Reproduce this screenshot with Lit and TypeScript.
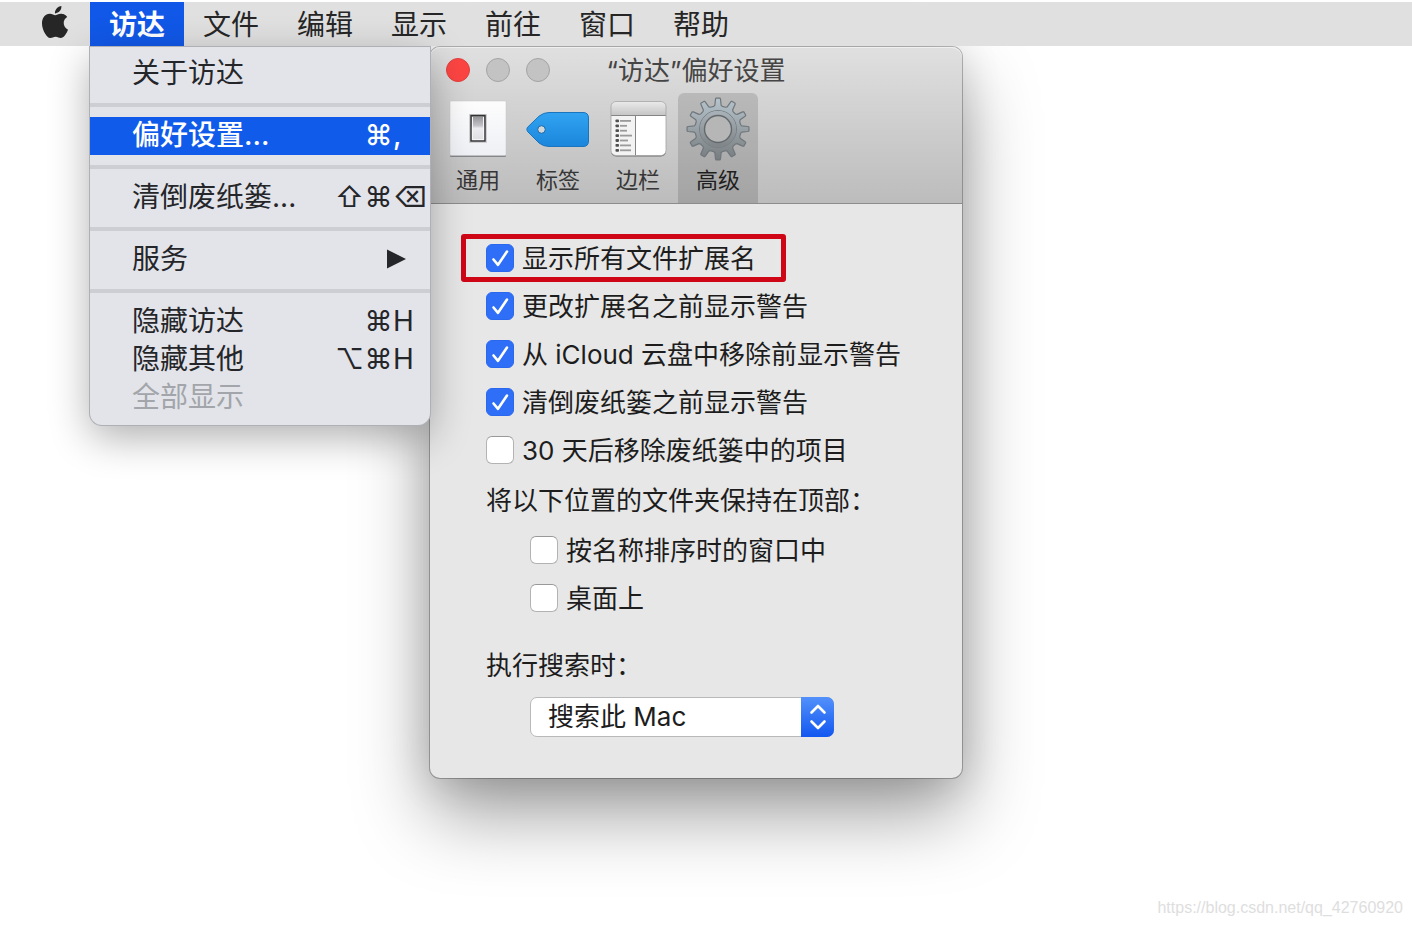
import { LitElement, html, svg, css } from "lit";
import { customElement, property, state } from "lit/decorators.js";
import { classMap } from "lit/directives/class-map.js";

const FONT = css`Inter, "Noto Sans CJK SC", sans-serif`;

/** Outline of a cog wheel with the given number of teeth, centred on 0,0. */
function gearPath(teeth: number, outer: number, root: number): string {
  const step = (Math.PI * 2) / teeth;
  const points: string[] = [];
  for (let i = 0; i < teeth; i++) {
    const a = i * step - Math.PI / 2;
    const corners: [number, number][] = [
      [-0.36, root],
      [-0.25, root + 1],
      [-0.16, outer - 1],
      [-0.12, outer],
      [0.12, outer],
      [0.16, outer - 1],
      [0.25, root + 1],
      [0.36, root],
    ];
    for (const [k, r] of corners) {
      const t = a + k * step;
      points.push(`${(Math.cos(t) * r).toFixed(2)} ${(Math.sin(t) * r).toFixed(2)}`);
    }
  }
  return `M${points.join("L")}Z`;
}

const appleLogo = html`<svg width="32" height="32" viewBox="0 0 24 24" aria-hidden="true">
  <path
    fill="#262626"
    d="M12.152 6.896c-.948 0-2.415-1.078-3.96-1.04-2.04.027-3.91 1.183-4.961 3.014-2.117 3.675-.546 9.103 1.519 12.09 1.013 1.454 2.208 3.09 3.792 3.039 1.52-.065 2.09-.987 3.935-.987 1.831 0 2.35.987 3.96.948 1.637-.026 2.676-1.48 3.676-2.948 1.156-1.688 1.636-3.325 1.662-3.415-.039-.013-3.182-1.221-3.22-4.857-.026-3.04 2.48-4.494 2.597-4.559-1.429-2.09-3.623-2.324-4.39-2.376-2-.156-3.675 1.09-4.61 1.09zM15.53 3.83c.843-1.012 1.4-2.427 1.245-3.83-1.207.052-2.662.805-3.532 1.818-.78.896-1.454 2.338-1.273 3.714 1.338.104 2.715-.688 3.559-1.701"
  />
</svg>`;

const switchIcon = html`<svg width="64" height="64" viewBox="0 0 64 64" aria-hidden="true">
  <defs>
    <linearGradient id="plate" x1="0" y1="0" x2="0" y2="1">
      <stop offset="0" stop-color="#fdfdfd" />
      <stop offset="1" stop-color="#eef0f5" />
    </linearGradient>
    <linearGradient id="rocker" x1="0" y1="0" x2="0" y2="1">
      <stop offset="0" stop-color="#8f8f93" />
      <stop offset="0.4" stop-color="#c4c4c8" />
      <stop offset="0.5" stop-color="#ececf0" />
      <stop offset="1" stop-color="#dedee2" />
    </linearGradient>
  </defs>
  <rect x="4" y="5" width="56" height="55" rx="1" fill="#85878b" />
  <rect x="4" y="4" width="56" height="54.5" rx="1" fill="url(#plate)" stroke="#c4c4c6" stroke-width="0.5" />
  <rect x="23" y="17" width="18" height="29" fill="#d0d0d2" />
  <rect x="25" y="18.500" width="14" height="25.500" fill="url(#rocker)" stroke="#333336" stroke-width="1.4" />
  <path d="M26.500 20v22.500h11V20" fill="none" stroke="#f6f6f8" stroke-width="1" />
</svg>`;

const tagIcon = html`<svg width="64" height="64" viewBox="0 0 64 64" aria-hidden="true">
  <defs>
    <linearGradient id="tag" x1="0" y1="0" x2="0" y2="1">
      <stop offset="0" stop-color="#31a3f1" />
      <stop offset="1" stop-color="#1b86dc" />
    </linearGradient>
  </defs>
  <path
    d="M1.500 30.300L13 19.200Q17.500 15.500 23 15.500H57Q62.500 15.500 62.500 21V44Q62.500 49.500 57 49.500H23Q17.500 49.500 13 46L1.500 34.500Q0 32.400 1.500 30.300Z"
    fill="url(#tag)"
    stroke="#1b75bd"
    stroke-width="1"
  />
  <circle cx="15.500" cy="32.500" r="3.800" fill="#d3d6d9" stroke="#1768ab" stroke-width="1" />
</svg>`;

const sidebarIcon = html`<svg width="64" height="64" viewBox="0 0 64 64" aria-hidden="true">
  <defs>
    <linearGradient id="bar" x1="0" y1="0" x2="0" y2="1">
      <stop offset="0" stop-color="#ececec" />
      <stop offset="1" stop-color="#c6c6c6" />
    </linearGradient>
    <clipPath id="frame"><rect x="5" y="4.500" width="55" height="54" rx="5" /></clipPath>
  </defs>
  <rect x="5" y="5" width="55" height="54.500" rx="5" fill="#6f6f6f" />
  <g clip-path="url(#frame)">
    <rect x="5" y="4" width="55" height="55" fill="#ffffff" />
    <rect x="5" y="4" width="55" height="14" fill="url(#bar)" />
    <rect x="5" y="18" width="24" height="41" fill="#f3f3f3" />
    <path d="M5 18.500H60M29.500 18.500V59" stroke="#858585" stroke-width="1" />
  </g>
  ${[11, 7, 7, 12, 8, 11, 11].map(
    (w, i) => svg`<rect x="9.500" y=${22.500 + i * 4.900} width="3.500" height="2.800" rx="0.800" fill="#505050" />
      <rect x="14" y=${23 + i * 4.900} width=${w} height="1.800" fill="#9a9a9a" />`,
  )}
  <rect x="5" y="4.500" width="55" height="54" rx="5" fill="none" stroke="#a2a2a2" stroke-width="0.800" />
</svg>`;

const gearIcon = html`<svg width="64" height="64" viewBox="-32 -32 64 64" aria-hidden="true">
  <defs>
    <linearGradient id="cog" x1="0" y1="0" x2="0" y2="1">
      <stop offset="0" stop-color="#b6c4cd" />
      <stop offset="0.500" stop-color="#98a1a6" />
      <stop offset="1" stop-color="#777c7f" />
    </linearGradient>
    <linearGradient id="rim" x1="0" y1="0" x2="0" y2="1">
      <stop offset="0" stop-color="#a7b0b6" />
      <stop offset="1" stop-color="#81868a" />
    </linearGradient>
  </defs>
  <path d=${gearPath(12, 31, 23)} fill="url(#cog)" stroke="#6f777c" stroke-width="1.200" stroke-linejoin="round" />
  <circle r="18.500" fill="none" stroke="#788086" stroke-width="1" />
  <circle r="16" fill="none" stroke="url(#rim)" stroke-width="4" />
  <circle r="13.500" fill="#b6b6b6" stroke="#62696d" stroke-width="1.400" />
</svg>`;

interface MenuEntry {
  label: string;
  keys?: [string, string, string];
  selected?: boolean;
  disabled?: boolean;
  submenu?: boolean;
}

const MENU_GROUPS: MenuEntry[][] = [
  [{ label: "关于访达" }],
  [{ label: "偏好设置...", keys: ["", "⌘", ","], selected: true }],
  [{ label: "清倒废纸篓...", keys: ["⇧", "⌘", "⌫"] }],
  [{ label: "服务", submenu: true }],
  [
    { label: "隐藏访达", keys: ["", "⌘", "H"] },
    { label: "隐藏其他", keys: ["⌥", "⌘", "H"] },
    { label: "全部显示", disabled: true },
  ],
];

@customElement("menu-bar")
class MenuBar extends LitElement {
  static styles = css`
    :host {
      display: block;
      background: #e0e0e0;
    }
    .bar {
      display: flex;
      height: 44px;
      padding-left: 20px;
    }
    button {
      border: 0;
      padding: 2px 19px 0;
      background: none;
      color: #262626;
      font: 400 28px/42px ${FONT};
      white-space: nowrap;
    }
    .apple {
      display: flex;
      justify-content: center;
      width: 70px;
      padding-top: 4px;
    }
    .active {
      background: #1158e8;
      color: #fff;
      font-weight: 700;
    }
  `;

  render() {
    const items = ["访达", "文件", "编辑", "显示", "前往", "窗口", "帮助"];
    return html`<nav class="bar">
      <button class="apple" aria-label="Apple">${appleLogo}</button>
      ${items.map((t, i) => html`<button class=${classMap({ active: i === 0 })}>${t}</button>`)}
    </nav>`;
  }
}

@customElement("finder-menu")
class FinderMenu extends LitElement {
  static styles = css`
    :host {
      display: block;
      box-sizing: border-box;
      padding: 8px 0;
      background: #e2e4e9;
      border-radius: 0 0 12px 12px;
      box-shadow:
        0 0 0 1px #aeb0b5,
        0 12px 40px rgba(0, 0, 0, 0.32);
    }
    .item {
      display: flex;
      align-items: center;
      justify-content: space-between;
      width: 100%;
      height: 38px;
      border: 0;
      padding: 0 8px 2px 42px;
      background: none;
      color: #25262a;
      font: 400 28px/36px ${FONT};
      white-space: nowrap;
    }
    .selected {
      background: #115bea;
      color: #fff;
      font-weight: 500;
    }
    .item:disabled {
      color: #a2a5a9;
    }
    .keys {
      display: grid;
      grid-template-columns: 29px 29px 29px;
      text-align: center;
    }
    .key {
      text-align: left;
    }
    .arrow {
      margin-right: 16px;
    }
    hr {
      height: 4px;
      margin: 10px 0;
      border: 0;
      background: #cdced3;
    }
  `;

  render() {
    return html`${MENU_GROUPS.map(
      (group, g) => html`${g > 0 ? html`<hr />` : ""}
      ${group.map(
        (e) => html`<button class=${classMap({ item: true, selected: !!e.selected })} ?disabled=${!!e.disabled}>
          <span>${e.label}</span>
          ${e.keys
            ? html`<span class="keys"><span>${e.keys[0]}</span><span>${e.keys[1]}</span><span class="key">${e.keys[2]}</span></span>`
            : ""}
          ${e.submenu
            ? html`<svg class="arrow" width="19" height="20" viewBox="0 0 19 20" aria-hidden="true"><path d="M0 0.500L19 10L0 19.500Z" fill="#25262a" /></svg>`
            : ""}
        </button>`,
      )}`,
    )}`;
  }
}

@customElement("check-row")
class CheckRow extends LitElement {
  @property() label = "";
  @property({ type: Boolean }) checked = false;
  @property({ type: Boolean }) marked = false;

  static styles = css`
    :host {
      display: block;
    }
    .row {
      position: relative;
      display: flex;
      align-items: center;
      gap: 8px;
      width: fit-content;
      height: 48px;
      color: #1d1d1d;
      font: 400 26px/46px ${FONT};
      white-space: nowrap;
    }
    .marked::after {
      content: "";
      position: absolute;
      inset: 0 -30px 0 -25px;
      border: 5px solid #cf0616;
      border-radius: 3px;
      pointer-events: none;
    }
    .box {
      display: grid;
    }
    .box > * {
      grid-area: 1 / 1;
    }
    .text {
      padding-top: 2px;
    }
    input {
      appearance: none;
      box-sizing: border-box;
      width: 28px;
      height: 28px;
      margin: 0;
      border: 1px solid #b3b3b3;
      border-top-color: #999;
      border-radius: 6px;
      background: #fff;
    }
    input:checked {
      border-color: #2a68ee;
      background: #2f6ff7;
    }
    svg {
      pointer-events: none;
    }
  `;

  render() {
    return html`<label class=${classMap({ row: true, marked: this.marked })}>
      <span class="box">
        <input
          type="checkbox"
          .checked=${this.checked}
          @change=${(e: Event) => (this.checked = (e.target as HTMLInputElement).checked)}
        />
        ${this.checked
          ? html`<svg width="28" height="28" viewBox="0 0 28 28" aria-hidden="true"><path d="M7.500 15.500L12 20.800L21 7.500" fill="none" stroke="#fff" stroke-width="2.600" stroke-linecap="round" stroke-linejoin="round" /></svg>`
          : ""}
      </span>
      <span class="text">${this.label}</span>
    </label>`;
  }
}

@customElement("preferences-window")
class PreferencesWindow extends LitElement {
  @state() private tab = "高级";

  static styles = css`
    :host {
      display: block;
      border-radius: 10px;
      background: #e7e7e7;
      box-shadow:
        0 0 0 1px rgba(0, 0, 0, 0.26),
        0 36px 76px rgba(0, 0, 0, 0.38),
        0 4px 40px rgba(0, 0, 0, 0.14);
    }
    header {
      border-bottom: 1px solid #8c8c8c;
      border-radius: 10px 10px 0 0;
      background: linear-gradient(#e0e0e0, #bcbcbc);
      box-shadow: inset 0 1px #f0f0f0;
    }
    .title {
      display: grid;
      grid-template-columns: 1fr auto 1fr;
      align-items: center;
      height: 46px;
      padding: 0 16px;
    }
    .lights {
      display: flex;
      gap: 16px;
    }
    .light {
      box-sizing: border-box;
      width: 24px;
      height: 24px;
      padding: 0;
      border: 1px solid #a4a4a4;
      border-radius: 50%;
      background: #c3c3c3;
    }
    .close {
      border-color: #e2403c;
      background: #fc4543;
    }
    h1 {
      margin: 0;
      padding-top: 2px;
      color: #454545;
      font: 400 26px/44px ${FONT};
      white-space: nowrap;
    }
    .tabs {
      display: flex;
      padding-left: 8px;
    }
    .tab {
      display: flex;
      flex-direction: column;
      align-items: center;
      gap: 2px;
      width: 80px;
      height: 110px;
      padding: 4px 0 0;
      border: 0;
      border-radius: 6px 6px 0 0;
      background: none;
      color: #363636;
      font: 400 22px/34px ${FONT};
    }
    .current {
      background: rgba(0, 0, 0, 0.13);
      color: #1f1f1f;
    }
    .body {
      display: flex;
      flex-direction: column;
      padding: 30px 56px 41px;
      color: #1d1d1d;
      font: 400 26px/50px ${FONT};
    }
    p {
      margin: 0;
      padding-top: 2px;
      white-space: nowrap;
    }
    .indent {
      padding-left: 44px;
    }
    .search {
      margin-top: 17px;
      padding-top: 2px;
    }
    .picker {
      display: grid;
      width: 304px;
      margin: 6px 0 0 44px;
    }
    .picker > * {
      grid-area: 1 / 1;
    }
    select {
      appearance: none;
      box-sizing: border-box;
      height: 40px;
      padding: 0 48px 0 17px;
      border: 1px solid #b9b9b9;
      border-radius: 7px;
      background: #fff;
      color: #1d1d1d;
      font: 400 26px/38px ${FONT};
    }
    .stepper {
      justify-self: end;
      display: flex;
      align-items: center;
      justify-content: center;
      width: 33px;
      height: 40px;
      border-radius: 0 7px 7px 0;
      background: linear-gradient(#5391fb, #1257f0);
      pointer-events: none;
    }
  `;

  render() {
    const tabs = [
      { name: "通用", icon: switchIcon },
      { name: "标签", icon: tagIcon },
      { name: "边栏", icon: sidebarIcon },
      { name: "高级", icon: gearIcon },
    ];
    return html`
      <header>
        <div class="title">
          <div class="lights">
            <button class="light close" aria-label="关闭"></button>
            <button class="light" aria-label="最小化"></button>
            <button class="light" aria-label="缩放"></button>
          </div>
          <h1>“访达”偏好设置</h1>
        </div>
        <div class="tabs">
          ${tabs.map(
            (t) => html`<button class=${classMap({ tab: true, current: t.name === this.tab })} @click=${() => (this.tab = t.name)}>
              ${t.icon}<span>${t.name}</span>
            </button>`,
          )}
        </div>
      </header>
      <div class="body">
        <check-row label="显示所有文件扩展名" checked marked></check-row>
        <check-row label="更改扩展名之前显示警告" checked></check-row>
        <check-row label="从 iCloud 云盘中移除前显示警告" checked></check-row>
        <check-row label="清倒废纸篓之前显示警告" checked></check-row>
        <check-row label="30 天后移除废纸篓中的项目"></check-row>
        <p>将以下位置的文件夹保持在顶部：</p>
        <div class="indent">
          <check-row label="按名称排序时的窗口中"></check-row>
          <check-row label="桌面上"></check-row>
        </div>
        <label class="search" for="scope">执行搜索时：</label>
        <div class="picker">
          <select id="scope">
            <option>搜索此 Mac</option>
          </select>
          <span class="stepper">
            <svg width="18" height="26" viewBox="0 0 18 26" aria-hidden="true">
              <path d="M2.500 8.500L9 2L15.500 8.500M2.500 17.500L9 24L15.500 17.500" fill="none" stroke="#fff" stroke-width="2.600" stroke-linecap="round" stroke-linejoin="round" />
            </svg>
          </span>
        </div>
      </div>
    `;
  }
}

@customElement("app-root")
class AppRoot extends LitElement {
  static styles = css`
    :host {
      position: relative;
      display: block;
      box-sizing: border-box;
      min-height: 100vh;
      padding-top: 2px;
      overflow: hidden;
      background: #fff;
    }
    menu-bar {
      position: relative;
      z-index: 1;
    }
    .desktop {
      display: flex;
      align-items: flex-start;
      padding: 1px 0 0 90px;
    }
    finder-menu {
      position: relative;
      z-index: 2;
      flex: 0 0 340px;
    }
    preferences-window {
      flex: 0 0 532px;
    }
    .credit {
      position: absolute;
      right: 9px;
      bottom: 8px;
      color: #dedede;
      font: 16px/20px "Liberation Sans", sans-serif;
      text-decoration: none;
    }
  `;

  render() {
    return html`
      <menu-bar></menu-bar>
      <main class="desktop">
        <finder-menu></finder-menu>
        <preferences-window></preferences-window>
      </main>
      <a class="credit" href="https://blog.csdn.net/qq_42760920">https://blog.csdn.net/qq_42760920</a>
    `;
  }
}
